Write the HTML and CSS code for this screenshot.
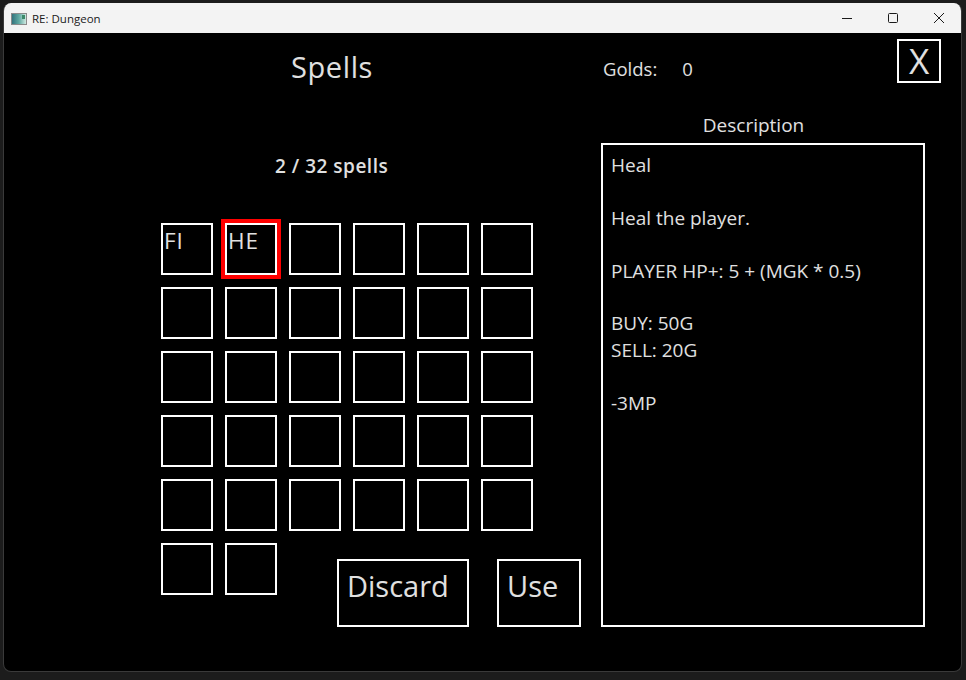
FILE: index.html
```html
<!DOCTYPE html>
<html>
<head>
<meta charset="utf-8">
<title>RE: Dungeon</title>
<link rel="stylesheet" href="styles.css">
</head>
<body>
<div class="window">
  <div class="titlebar">
    <svg class="app-icon" width="16" height="12" viewBox="0 0 16 12">
      <defs>
        <linearGradient id="g" x1="0" y1="0" x2="1" y2="0">
          <stop offset="0" stop-color="#2f6f7a"/>
          <stop offset="0.5" stop-color="#5fa9a2"/>
          <stop offset="1" stop-color="#d8eee6"/>
        </linearGradient>
      </defs>
      <rect x="0.5" y="0.5" width="15" height="11" fill="url(#g)" stroke="#8a8a8a"/>
      <rect x="11" y="2" width="3" height="4" fill="#3d8a6a"/>
    </svg>
    <span class="app-title">RE: Dungeon</span>
    <div class="controls">
      <div class="ctrl"><svg width="12" height="12" viewBox="0 0 12 12"><path d="M1 6.5h10" stroke="#1a1a1a" stroke-width="1"/></svg></div>
      <div class="ctrl"><svg width="12" height="12" viewBox="0 0 12 12"><rect x="1.5" y="1.5" width="9" height="9" rx="1" fill="none" stroke="#1a1a1a" stroke-width="1"/></svg></div>
      <div class="ctrl"><svg width="12" height="12" viewBox="0 0 12 12"><path d="M1 1L11 11M11 1L1 11" stroke="#1a1a1a" stroke-width="1"/></svg></div>
    </div>
  </div>
  <div class="content">
    <div class="header">
      <div class="title-block"><h1 class="title">Spells</h1></div>
      <div class="golds"><span class="golds-label">Golds:</span><span class="golds-value">0</span></div>
      <div class="close-btn">X</div>
    </div>
    <div class="main">
      <div class="left">
        <div class="count">2 / 32 spells</div>
        <div class="grid">
          <div class="cell">FI</div>
          <div class="cell selected">HE</div>
          <div class="cell"></div><div class="cell"></div><div class="cell"></div><div class="cell"></div>
          <div class="cell"></div><div class="cell"></div><div class="cell"></div><div class="cell"></div><div class="cell"></div><div class="cell"></div>
          <div class="cell"></div><div class="cell"></div><div class="cell"></div><div class="cell"></div><div class="cell"></div><div class="cell"></div>
          <div class="cell"></div><div class="cell"></div><div class="cell"></div><div class="cell"></div><div class="cell"></div><div class="cell"></div>
          <div class="cell"></div><div class="cell"></div><div class="cell"></div><div class="cell"></div><div class="cell"></div><div class="cell"></div>
        </div>
        <div class="bottom-row">
          <div class="cell"></div>
          <div class="cell"></div>
          <div class="btn btn-discard">Discard</div>
          <div class="btn btn-use">Use</div>
        </div>
      </div>
      <div class="right">
        <div class="desc-label">Description</div>
        <div class="desc-box">
          <div>Heal</div>
          <div>&nbsp;</div>
          <div>Heal the player.</div>
          <div>&nbsp;</div>
          <div>PLAYER HP+: 5 + (MGK * 0.5)</div>
          <div>&nbsp;</div>
          <div>BUY: 50G</div>
          <div>SELL: 20G</div>
          <div>&nbsp;</div>
          <div>-3MP</div>
        </div>
      </div>
    </div>
  </div>
</div>
</body>
</html>
```

FILE: styles.css
```css
* { box-sizing: border-box; }

html, body {
  margin: 0;
  padding: 0;
  background: #1c1c1c;
  width: 966px;
  height: 680px;
  overflow: hidden;
}

.window {
  margin: 3px 0 0 3px;
  width: 959px;
  height: 669px;
  background: #000;
  border: 1px solid #3a3a3a;
  border-top: 0;
  border-radius: 8px;
  overflow: hidden;
  font-family: "Open Sans", "Noto Sans", sans-serif;
  color: #e0e0e0;
}

.titlebar {
  height: 30px;
  background: #f3f3f3;
  display: flex;
  align-items: center;
  margin: 0 -1px;
}

.app-icon {
  margin-left: 8px;
  margin-top: 1px;
}

.app-title {
  margin-left: 5px;
  font-family: "Segoe UI", "Open Sans", sans-serif;
  font-size: 11.5px;
  color: #1a1a1a;
}

.controls {
  margin-left: auto;
  display: flex;
  height: 30px;
}

.ctrl {
  width: 46px;
  height: 30px;
  display: flex;
  align-items: center;
  justify-content: center;
}

.content {
  height: 639px;
}

.header {
  display: flex;
  align-items: flex-start;
  height: 79px;
}

.title-block {
  width: 599px;
  padding-left: 287px;
}

.title {
  margin: 14px 0 0 0;
  font-size: 29px;
  font-weight: normal;
  line-height: 39px;
  letter-spacing: 0.6px;
}

.golds {
  margin-top: 23px;
  font-size: 18.5px;
  line-height: 26px;
}

.golds-value {
  margin-left: 25px;
}

.close-btn {
  margin-left: auto;
  margin-right: 20px;
  margin-top: 6px;
  width: 44px;
  height: 44px;
  border: 2px solid #fff;
  font-size: 35px;
  line-height: 40px;
  text-align: center;
}

.main {
  display: flex;
}

.left {
  width: 597px;
  padding-left: 157px;
}

.count {
  padding-top: 41px;
  padding-left: 114px;
  font-size: 19px;
  font-weight: 600;
  line-height: 26px;
  letter-spacing: 0.5px;
}

.grid {
  margin-top: 44px;
  display: grid;
  grid-template-columns: repeat(6, 52px);
  grid-auto-rows: 52px;
  gap: 12px;
}

.cell {
  width: 52px;
  height: 52px;
  border: 2px solid #fff;
  font-size: 22.5px;
  line-height: 31px;
  padding-left: 1px;
  letter-spacing: 1px;
}

.cell.selected {
  outline: 4px solid #ff0000;
}

.bottom-row {
  margin-top: 12px;
  display: flex;
  align-items: flex-start;
  gap: 12px;
}

.btn {
  margin-top: 16px;
  height: 68px;
  border: 2px solid #fff;
  font-size: 29px;
  line-height: 39px;
  padding: 5px 0 0 8px;
}

.btn-discard {
  width: 132px;
  margin-left: 48px;
}

.btn-use {
  width: 84px;
  margin-left: 16px;
}

.right {
  width: 324px;
}

.desc-label {
  font-size: 19px;
  line-height: 26px;
  text-align: center;
  padding-right: 19px;
  margin-bottom: 5px;
}

.desc-box {
  height: 484px;
  border: 2px solid #fff;
  padding: 7px 8px;
  font-size: 19px;
  line-height: 26.4px;
}
```
